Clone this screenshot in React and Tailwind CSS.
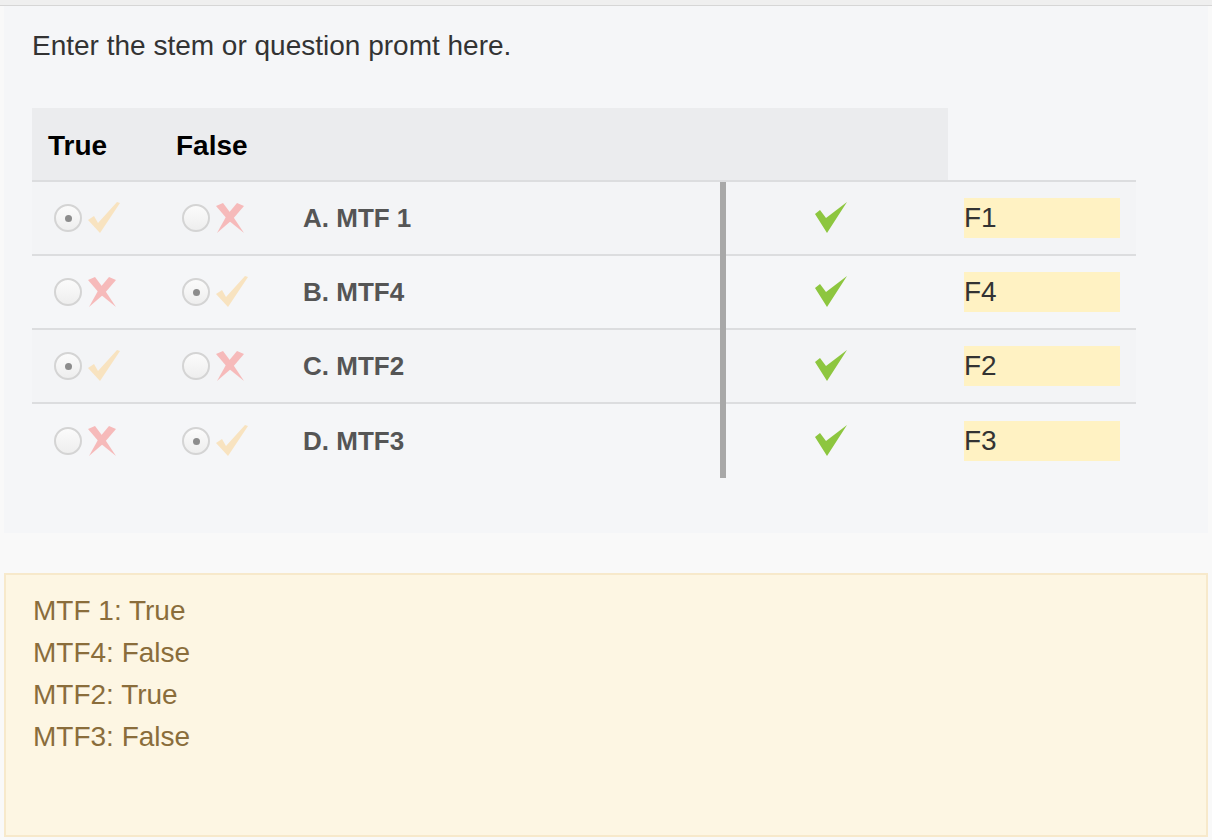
import React from 'react'

const rows = [
  { label: 'A. MTF 1', answer: true, field: 'F1' },
  { label: 'B. MTF4', answer: false, field: 'F4' },
  { label: 'C. MTF2', answer: true, field: 'F2' },
  { label: 'D. MTF3', answer: false, field: 'F3' },
]

const Radio = ({ checked }) => (
  <span className="flex h-[28px] w-[28px] shrink-0 items-center justify-center rounded-full border-2 border-[#d4d4d4] bg-gradient-to-b from-[#fbfbfb] to-[#eeeeee]">
    {checked && <span className="h-[7px] w-[7px] rounded-full bg-[#8c8c8c]" />}
  </span>
)

const SoftCheck = () => (
  <svg width="32" height="32" viewBox="0 0 32 32">
    <polygon points="0,18 6,14 10,21 29,0 32,1 12,31" fill="#f8e3c0" />
  </svg>
)

// brush-like cross: wide ends at the top, pointed ends at the bottom
const SoftCross = () => (
  <svg width="28" height="30" viewBox="0 0 28 30">
    <polygon points="0,3 7,0 16,12 28,30 12,17" fill="#f6baba" />
    <polygon points="21,0 28,3 16,17 1,30 11,12" fill="#f6baba" />
  </svg>
)

const GreenCheck = () => (
  <svg width="32" height="32" viewBox="0 0 32 32">
    <polygon points="0,12 5,8 11,16 32,0 12,31" fill="#8dc63f" />
  </svg>
)

const Choice = ({ checked, correct }) => (
  <div className="flex items-center gap-[6px] pl-[22px]">
    <Radio checked={checked} />
    {correct ? <SoftCheck /> : <SoftCross />}
  </div>
)

export default function App() {
  return (
    <div className="min-h-[840px] bg-[#f9f9f9] font-['Liberation_Sans',Arial,sans-serif]">
      <div className="h-[6px] border-b border-[#d6d6d6] bg-[#efefef]" />

      <div className="mx-[4px] bg-[#f5f6f8] pb-[55px] pl-[28px] pr-[28px] pt-[22px]">
        <p className="text-[28px] leading-[36px] text-[#333]">Enter the stem or question promt here.</p>

        <div className="mt-[44px] w-[1104px]">
          {/* header */}
          <div className="flex border-b-2 border-[#dcdddf]">
            <div className="flex h-[72px] w-[916px] items-center bg-[#ebecee] pt-[3px]">
              <div className="w-[128px] pl-[16px] text-[28px] font-bold leading-[42px] text-black">True</div>
              <div className="w-[128px] pl-[16px] text-[28px] font-bold leading-[42px] text-black">False</div>
            </div>
          </div>

          {rows.map((r, i) => {
            const line = i < rows.length - 1 ? 'border-b-2 border-[#dcdddf]' : ''
            return (
              <div key={r.label} className={`flex h-[74px] ${i % 2 === 0 ? 'bg-[#f3f4f6]' : 'bg-[#f5f6f8]'}`}>
                <div className={`flex w-[128px] items-center ${line}`}>
                  <Choice checked={r.answer} correct={r.answer} />
                </div>
                <div className={`flex w-[128px] items-center ${line}`}>
                  <Choice checked={!r.answer} correct={!r.answer} />
                </div>
                <div className={`flex w-[432px] items-center pl-[15px] text-[26px] font-bold text-[#555] ${line}`}>
                  {r.label}
                </div>
                <div className="w-[6px] bg-[#a8a8a8]" />
                <div className={`flex w-[222px] items-center justify-center pr-[12px] ${line}`}>
                  <GreenCheck />
                </div>
                <div className={`flex w-[188px] items-center px-[16px] ${line}`}>
                  <div className="h-[40px] w-full bg-[#fff2c3] text-[28px] leading-[40px] text-[#333]">{r.field}</div>
                </div>
              </div>
            )
          })}
        </div>
      </div>

      <div className="mx-[4px] mt-[40px] h-[264px] border-2 border-[#f7e9cb] bg-[#fdf6e3] px-[27px] pt-[15px] text-[28px] leading-[42px] text-[#8a6d3b]">
        <div>MTF 1: True</div>
        <div>MTF4: False</div>
        <div>MTF2: True</div>
        <div>MTF3: False</div>
      </div>
    </div>
  )
}
